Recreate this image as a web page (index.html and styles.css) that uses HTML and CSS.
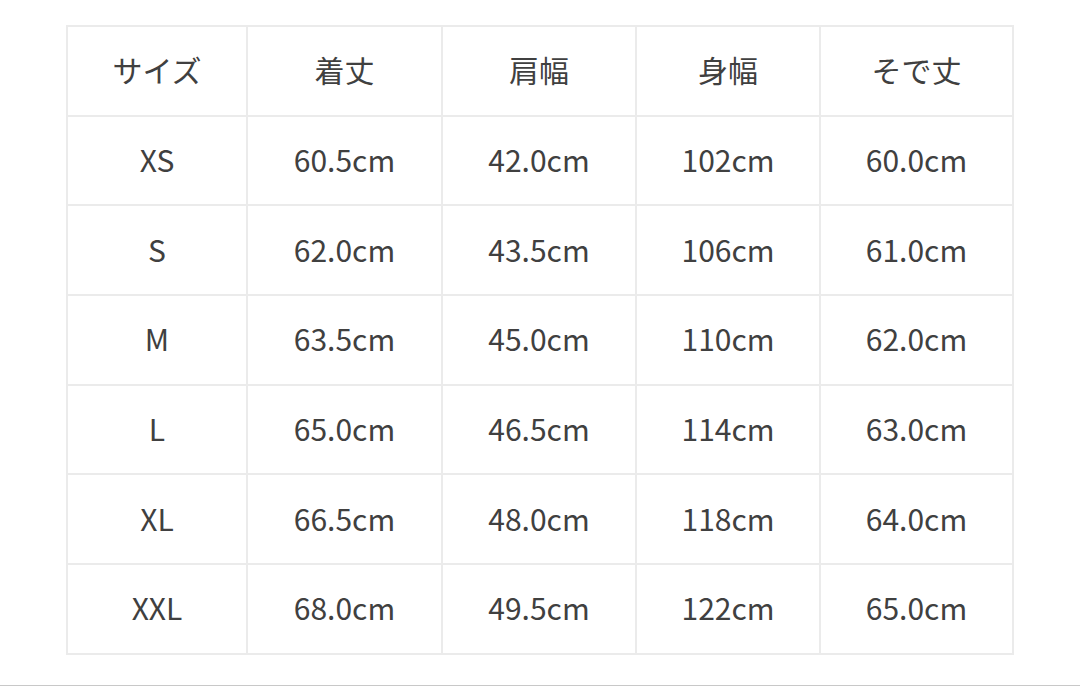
FILE: index.html
```html
<!DOCTYPE html>
<html lang="ja">
<head>
<meta charset="utf-8">
<link rel="stylesheet" href="styles.css">
</head>
<body>
<div class="page">
  <table class="size-table">
    <colgroup>
      <col class="c1"><col class="c2"><col class="c3"><col class="c4"><col class="c5">
    </colgroup>
    <thead>
      <tr><th>サイズ</th><th>着丈</th><th>肩幅</th><th>身幅</th><th>そで丈</th></tr>
    </thead>
    <tbody>
      <tr><td>XS</td><td>60.5cm</td><td>42.0cm</td><td>102cm</td><td>60.0cm</td></tr>
      <tr><td>S</td><td>62.0cm</td><td>43.5cm</td><td>106cm</td><td>61.0cm</td></tr>
      <tr><td>M</td><td>63.5cm</td><td>45.0cm</td><td>110cm</td><td>62.0cm</td></tr>
      <tr><td>L</td><td>65.0cm</td><td>46.5cm</td><td>114cm</td><td>63.0cm</td></tr>
      <tr><td>XL</td><td>66.5cm</td><td>48.0cm</td><td>118cm</td><td>64.0cm</td></tr>
      <tr><td>XXL</td><td>68.0cm</td><td>49.5cm</td><td>122cm</td><td>65.0cm</td></tr>
    </tbody>
  </table>
</div>
</body>
</html>
```

FILE: styles.css
```css
html, body {
  margin: 0;
  padding: 0;
  background: #ffffff;
}
body {
  font-family: "Noto Sans CJK JP", "Noto Sans", sans-serif;
  color: #404040;
}
.page {
  height: 686px;
  border-bottom: 1px solid #c8c8c8;
  padding: 25px 0 0 66px;
  box-sizing: border-box;
}
.size-table {
  border-collapse: collapse;
  table-layout: fixed;
  width: 946px;
}
.c1 { width: 180px; }
.c2 { width: 195px; }
.c3 { width: 194px; }
.c4 { width: 184px; }
.c5 { width: 193px; }
.size-table th,
.size-table td {
  border: 2px solid #ebebeb;
  height: 84.7px;
  padding: 0 0 3px;
  text-align: center;
  vertical-align: middle;
  font-size: 30px;
  font-weight: 400;
  line-height: 1;
}
```
